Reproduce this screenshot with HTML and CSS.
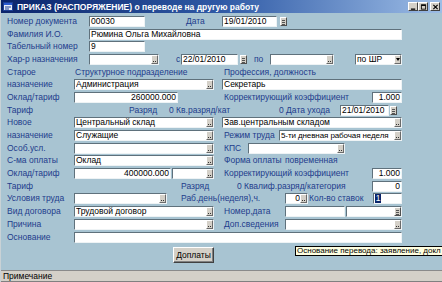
FILE: index.html
```html
<!DOCTYPE html>
<html lang="ru">

<head>
    <meta charset="UTF-8">
    <title>ПРИКАЗ (РАСПОРЯЖЕНИЕ) о переводе на другую работу</title>
    <link rel="stylesheet" href="styles.css">
</head>

<body>
    <div class="window">
        <div class="titlebar">
            <svg class="title-icon" width="10" height="9" viewBox="0 0 10 9">
                <rect x="0.5" y="0.5" width="9" height="8" fill="#e8eef8" stroke="#1c3f94" />
                <rect x="1" y="1" width="8" height="2" fill="#2a5bd0" />
                <path d="M2 5h6M2 7h4" stroke="#1c3f94" stroke-width="1" />
            </svg>
            <span class="title-text">ПРИКАЗ (РАСПОРЯЖЕНИЕ) о переводе на другую работу</span>
            <div class="win-btns">
                <span class="win-btn"><svg width="8" height="7" viewBox="0 0 8 7"><path d="M1 6h5" stroke="#000" stroke-width="1.5" /></svg></span>
                <span class="win-btn"><svg width="8" height="7" viewBox="0 0 8 7"><rect x="1.5" y="1" width="5" height="5" fill="none" stroke="#000" /><path d="M1.5 1.5h5" stroke="#000" stroke-width="1.5" /></svg></span>
                <span class="win-btn close"><svg width="8" height="7" viewBox="0 0 8 7"><path d="M1.5 1l5 5M6.5 1l-5 5" stroke="#000" stroke-width="1.3" /></svg></span>
            </div>
        </div>

        <div class="form">
            <!-- шапка документа -->
            <div class="row">
                <span class="lbl lbl-a">Номер документа</span>
                <span class="fld w56">00030</span>
                <span class="lbl ml41 w36">Дата</span>
                <span class="fld w55">19/01/2010</span>
                <span class="cal ml3"></span>
            </div>
            <div class="row">
                <span class="lbl lbl-a">Фамилия И.О.</span>
                <span class="fld w313">Рюмина Ольга Михайловна</span>
            </div>
            <div class="row">
                <span class="lbl lbl-a">Табельный номер</span>
                <span class="fld w56">9</span>
            </div>
            <div class="row">
                <span class="lbl lbl-a">Хар-р назначения</span>
                <span class="fld cmb w70"><i></i><b class="dots"></b></span>
                <span class="lbl ml17 w5">с</span>
                <span class="fld w57">22/01/2010</span>
                <span class="cal ml2"></span>
                <span class="lbl ml7 w16">по</span>
                <span class="fld cmb w64"><i></i><b class="dots"></b></span>
                <span class="fld cmb w47 ml21"><i>по ШР</i><b class="drop"></b></span>
            </div>

            <!-- старое назначение -->
            <div class="row">
                <span class="lbl lbl-b">Старое</span>
                <span class="lbl ml1 w147">Структурное подразделение</span>
                <span class="lbl ml2">Профессия, должность</span>
            </div>
            <div class="row">
                <span class="lbl lbl-b">назначение</span>
                <span class="fld cmb w140"><i>Администрация</i><b class="dots"></b></span>
                <span class="fld w180 ml8">Секретарь</span>
            </div>
            <div class="row">
                <span class="lbl lbl-b">Оклад/тариф</span>
                <span class="fld num w104">260000.000</span>
                <span class="lbl ml46 w148">Корректирующий коэффициент</span>
                <span class="fld num w30">1.000</span>
            </div>
            <div class="row">
                <span class="lbl lbl-b">Тариф</span>
                <span class="lbl ml55 w40">Разряд</span>
                <span class="lbl w110">0 Кв.разряд/кат</span>
                <span class="lbl w61">0 Дата ухода</span>
                <span class="fld w49">21/01/2010</span>
                <span class="cal ml1"></span>
            </div>

            <!-- новое назначение -->
            <div class="row">
                <span class="lbl lbl-b">Новое</span>
                <span class="fld cmb w140"><i>Центральный склад</i><b class="dots"></b></span>
                <span class="fld cmb w180 ml8"><i>Зав.центральным складом</i><b class="dots"></b></span>
            </div>
            <div class="row">
                <span class="lbl lbl-b">назначение</span>
                <span class="fld cmb w140"><i>Служащие</i><b class="dots"></b></span>
                <span class="lbl ml10 w55">Режим труда</span>
                <span class="fld cmb tight w123"><i>5-ти дневная рабочая неделя</i><b class="dots"></b></span>
            </div>
            <div class="row">
                <span class="lbl lbl-b">Особ.усл.</span>
                <span class="fld cmb w140"><i></i><b class="dots"></b></span>
                <span class="lbl ml10 w24">КПС</span>
                <span class="fld cmb w97"><i></i><b class="dots"></b></span>
            </div>
            <div class="row">
                <span class="lbl lbl-b">С-ма оплаты</span>
                <span class="fld cmb w140"><i>Оклад</i><b class="dots"></b></span>
                <span class="lbl ml10 w61">Форма оплаты</span>
                <span class="lbl">повременная</span>
            </div>
            <div class="row">
                <span class="lbl lbl-b">Оклад/тариф</span>
                <span class="fld num w97">400000.000</span>
                <span class="fld cmb w42 ml1"><i></i><b class="dots"></b></span>
                <span class="lbl ml10 w148">Корректирующий коэффициент</span>
                <span class="fld num w30">1.000</span>
            </div>
            <div class="row">
                <span class="lbl lbl-b">Тариф</span>
                <span class="lbl ml107 w56">Разряд</span>
                <span class="lbl w7">0</span>
                <span class="lbl w128">Квалиф.разряд/категория</span>
                <span class="fld num w30">0</span>
            </div>
            <div class="row">
                <span class="lbl lbl-b">Условия труда</span>
                <span class="fld cmb w93"><i></i><b class="dots"></b></span>
                <span class="lbl ml14 w104">Раб.день(неделя),ч.</span>
                <span class="fld cmb num w23"><i>0</i><b class="dots"></b></span>
                <span class="lbl ml1 w64">Кол-во ставок</span>
                <span class="fld w29"><em class="sel">1</em></span>
            </div>

            <!-- договор -->
            <div class="row">
                <span class="lbl lbl-b">Вид договора</span>
                <span class="fld cmb w140"><i>Трудовой договор</i><b class="dots"></b></span>
                <span class="lbl ml10 w61">Номер,дата</span>
                <span class="fld w60"></span>
                <span class="fld cmb w56 ml1"><i></i><b class="cal-in"></b></span>
            </div>
            <div class="row">
                <span class="lbl lbl-b">Причина</span>
                <span class="fld cmb w140"><i></i><b class="dots"></b></span>
                <span class="lbl ml10 w61">Доп.сведения</span>
                <span class="fld cmb w117"><i></i><b class="dots"></b></span>
            </div>
            <div class="row">
                <span class="lbl lbl-b">Основание</span>
                <span class="fld w328"></span>
            </div>

            <div class="actions">
                <button class="btn">Доплаты</button>
            </div>
            <div class="tooltip">Основание перевода: заявление, докл</div>
        </div>

        <div class="statusbar">Примечание</div>
    </div>
</body>

</html>
```

FILE: styles.css
```css
html,
body {
    margin: 0;
    padding: 0;
}

body {
    font-family: "Liberation Sans", Arial, sans-serif;
    font-size: 8.5px;
    background: #a8c4d2;
    overflow: hidden;
}

.window {
    width: 442px;
    height: 282px;
    display: flex;
    flex-direction: column;
    background: #a8c4d2;
    border-left: 1px solid #c9d2d6;
    box-sizing: border-box;
}

/* заголовок окна */
.titlebar {
    height: 13px;
    flex: none;
    display: flex;
    align-items: center;
    padding-left: 2px;
    background: linear-gradient(to right, #0a246a 0%, #2f5aa6 50%, #9dbde6 100%);
}

.title-icon {
    flex: none;
    margin-right: 4px;
}

.title-text {
    color: #fff;
    font-weight: bold;
    font-size: 8.5px;
    white-space: nowrap;
}

.win-btns {
    margin-left: auto;
    margin-right: 2px;
    display: flex;
}

.win-btn {
    width: 10px;
    height: 9px;
    box-sizing: border-box;
    background: #d4d0c8;
    border: 1px solid;
    border-color: #fff #404040 #404040 #fff;
    display: flex;
    align-items: center;
    justify-content: center;
}

.win-btn svg {
    width: 7px;
    height: 6px;
}

.win-btn.close {
    margin-left: 2px;
}

/* форма */
.form {
    position: relative;
    flex: 1;
    padding: 2px 0 0 6px;
}

.row {
    height: 12.7px;
    display: flex;
    align-items: center;
}

.lbl {
    flex: none;
    color: #1e3c8c;
    white-space: nowrap;
    line-height: 11px;
}

.lbl-a {
    width: 82px;
}

.lbl-b {
    width: 67px;
}

.fld {
    flex: none;
    height: 11px;
    box-sizing: border-box;
    background: #fff;
    border: 1px solid;
    border-color: #5f717c #eef3f5 #eef3f5 #5f717c;
    color: #000;
    line-height: 9px;
    padding: 0 1px;
    white-space: nowrap;
    overflow: hidden;
}

.fld.num {
    text-align: right;
}

.cmb {
    display: flex;
    padding-right: 0;
}

.cmb i {
    flex: 1;
    font-style: normal;
    overflow: hidden;
}

.tight i {
    font-size: 8px;
    letter-spacing: -0.1px;
}

.dots,
.drop,
.cal-in {
    flex: none;
    width: 7px;
    height: 9px;
    box-sizing: border-box;
    background: #d4d0c8;
    border: 1px solid;
    border-color: #fff #6a6a6a #6a6a6a #fff;
    position: relative;
}

.dots::after {
    content: "";
    position: absolute;
    left: 1px;
    bottom: 1px;
    width: 4px;
    height: 1px;
    background: repeating-linear-gradient(to right, #333 0 1px, transparent 1px 2px);
}

.drop::after {
    content: "";
    position: absolute;
    left: 1px;
    top: 2px;
    border-left: 2px solid transparent;
    border-right: 2px solid transparent;
    border-top: 3px solid #000;
}

.cal,
.cal-in::after {
    flex: none;
    width: 7px;
    height: 9px;
    box-sizing: border-box;
    background:
        linear-gradient(#555, #555) 1px 2px / 3px 1px no-repeat,
        linear-gradient(#555, #555) 1px 4px / 3px 1px no-repeat,
        linear-gradient(#555, #555) 1px 6px / 3px 1px no-repeat,
        #d4d0c8;
    border: 1px solid;
    border-color: #fff #505050 #505050 #fff;
}

.cal-in::after {
    content: "";
    position: absolute;
    left: -1px;
    top: -1px;
}

.sel {
    display: inline-block;
    font-style: normal;
    background: #0a246a;
    color: #fff;
    width: 6px;
    text-align: center;
}

.actions {
    display: flex;
    margin-top: 4px;
    padding-left: 166px;
}

.btn {
    width: 41px;
    height: 16px;
    padding: 0;
    font-family: "Liberation Sans", Arial, sans-serif;
    font-size: 8.5px;
    color: #000;
    background: #d4d0c8;
    border: 1px solid;
    border-color: #fff #404040 #404040 #fff;
    box-shadow: inset -1px -1px 0 #808080;
}

.tooltip {
    position: absolute;
    left: 294px;
    top: 233px;
    width: 150px;
    height: 10px;
    box-sizing: border-box;
    background: #ffffe1;
    border: 1px solid #000;
    border-right: none;
    color: #000;
    font-size: 8px;
    line-height: 8px;
    padding-left: 1px;
    white-space: nowrap;
    overflow: hidden;
}

.statusbar {
    flex: none;
    height: 12px;
    box-sizing: border-box;
    background: #d4d0c8;
    border-top: 1px solid #8a8a8a;
    border-bottom: 1px solid #808080;
    color: #000;
    line-height: 10px;
    padding-left: 2px;
}

/* ширины */
.w5 { width: 5px; }
.w7 { width: 7px; }
.w16 { width: 16px; }
.w23 { width: 23px; }
.w24 { width: 24px; }
.w29 { width: 29px; }
.w30 { width: 30px; }
.w36 { width: 36px; }
.w40 { width: 40px; }
.w42 { width: 42px; }
.w47 { width: 47px; }
.w49 { width: 49px; }
.w55 { width: 55px; }
.w56 { width: 56px; }
.w57 { width: 57px; }
.w60 { width: 60px; }
.w61 { width: 61px; }
.w64 { width: 64px; }
.w70 { width: 70px; }
.w93 { width: 93px; }
.w97 { width: 97px; }
.w104 { width: 104px; }
.w110 { width: 110px; }
.w117 { width: 117px; }
.w123 { width: 123px; }
.w128 { width: 128px; }
.w140 { width: 140px; }
.w147 { width: 147px; }
.w148 { width: 148px; }
.w180 { width: 180px; }
.w313 { width: 313px; }
.w328 { width: 328px; }

/* отступы */
.ml1 { margin-left: 1px; }
.ml2 { margin-left: 2px; }
.ml3 { margin-left: 3px; }
.ml7 { margin-left: 7px; }
.ml8 { margin-left: 8px; }
.ml10 { margin-left: 10px; }
.ml14 { margin-left: 14px; }
.ml17 { margin-left: 17px; }
.ml21 { margin-left: 21px; }
.ml41 { margin-left: 41px; }
.ml46 { margin-left: 46px; }
.ml55 { margin-left: 55px; }
.ml107 { margin-left: 107px; }
```
